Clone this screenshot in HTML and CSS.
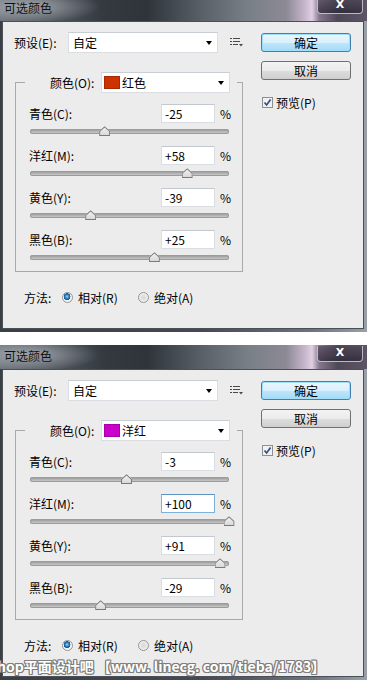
FILE: index.html
```html
<!DOCTYPE html>
<html lang="zh-CN">
  <head>
    <meta charset="UTF-8" />
    <meta name="viewport" content="width=device-width, initial-scale=1.0" />
    <title>可选颜色</title>
    <link rel="stylesheet" href="styles.css">
  </head>
  <body>
    <!-- dialog 1: red -->
    <div class="dialog dialog--cropped">
      <div class="titlebar">
        <span class="titlebar__text">可选颜色</span>
        <span class="titlebar__close">X</span>
      </div>
      <div class="dialog__body">
        <div class="dialog__main">
          <div class="preset">
            <span class="preset__label">预设(E):</span>
            <div class="select select--preset">
              <span>自定</span>
              <i class="select__arrow"></i>
            </div>
            <svg class="preset__menu" width="13" height="9" viewBox="0 0 13 9">
              <g fill="#4a4a4a">
                <rect x="0" y="0" width="2" height="1" />
                <rect x="3" y="0" width="7" height="1" />
                <rect x="0" y="3" width="2" height="1" />
                <rect x="3" y="3" width="7" height="1" />
                <rect x="0" y="6" width="2" height="1" />
                <rect x="3" y="6" width="5" height="1" />
                <path d="M9 6h4l-2 2.5z" />
              </g>
            </svg>
          </div>
          <div class="group">
            <div class="group__head">
              <span class="group__label">颜色(O):</span>
              <div class="select select--color">
                <span class="swatch swatch--red"></span>
                <span>红色</span>
                <i class="select__arrow"></i>
              </div>
            </div>
            <div class="channel">
              <div class="channel__row">
                <span class="channel__name">青色(C):</span>
                <span class="channel__input">-25</span>
                <span class="channel__unit">%</span>
              </div>
              <div class="slider"><span class="slider__thumb" style="left: 37.5%"></span></div>
            </div>
            <div class="channel">
              <div class="channel__row">
                <span class="channel__name">洋红(M):</span>
                <span class="channel__input">+58</span>
                <span class="channel__unit">%</span>
              </div>
              <div class="slider"><span class="slider__thumb" style="left: 79%"></span></div>
            </div>
            <div class="channel">
              <div class="channel__row">
                <span class="channel__name">黄色(Y):</span>
                <span class="channel__input">-39</span>
                <span class="channel__unit">%</span>
              </div>
              <div class="slider"><span class="slider__thumb" style="left: 30.5%"></span></div>
            </div>
            <div class="channel">
              <div class="channel__row">
                <span class="channel__name">黑色(B):</span>
                <span class="channel__input">+25</span>
                <span class="channel__unit">%</span>
              </div>
              <div class="slider"><span class="slider__thumb" style="left: 62.5%"></span></div>
            </div>
          </div>
          <div class="method">
            <span class="method__label">方法:</span>
            <span class="method__option">
              <i class="radio radio--on"></i>相对(R)
            </span>
            <span class="method__option">
              <i class="radio"></i>绝对(A)
            </span>
          </div>
        </div>
        <div class="dialog__side">
          <div class="btn btn--default">确定</div>
          <div class="btn">取消</div>
          <div class="check">
            <svg class="check__box" width="11" height="11" viewBox="0 0 11 11">
              <rect x="0.5" y="0.5" width="10" height="10" fill="#f1f1f1" stroke="#8e8f8f" />
              <path d="M2.5 5.5L4.6 8L8.6 2.6" fill="none" stroke="#2d4f8e" stroke-width="1.7" />
            </svg>
            <span>预览(P)</span>
          </div>
        </div>
      </div>
    </div>

    <!-- dialog 2: magenta -->
    <div class="dialog">
      <div class="titlebar">
        <span class="titlebar__text">可选颜色</span>
        <span class="titlebar__close">X</span>
      </div>
      <div class="dialog__body">
        <div class="dialog__main">
          <div class="preset">
            <span class="preset__label">预设(E):</span>
            <div class="select select--preset">
              <span>自定</span>
              <i class="select__arrow"></i>
            </div>
            <svg class="preset__menu" width="13" height="9" viewBox="0 0 13 9">
              <g fill="#4a4a4a">
                <rect x="0" y="0" width="2" height="1" />
                <rect x="3" y="0" width="7" height="1" />
                <rect x="0" y="3" width="2" height="1" />
                <rect x="3" y="3" width="7" height="1" />
                <rect x="0" y="6" width="2" height="1" />
                <rect x="3" y="6" width="5" height="1" />
                <path d="M9 6h4l-2 2.5z" />
              </g>
            </svg>
          </div>
          <div class="group">
            <div class="group__head">
              <span class="group__label">颜色(O):</span>
              <div class="select select--color">
                <span class="swatch swatch--magenta"></span>
                <span>洋红</span>
                <i class="select__arrow"></i>
              </div>
            </div>
            <div class="channel">
              <div class="channel__row">
                <span class="channel__name">青色(C):</span>
                <span class="channel__input">-3</span>
                <span class="channel__unit">%</span>
              </div>
              <div class="slider"><span class="slider__thumb" style="left: 48.5%"></span></div>
            </div>
            <div class="channel">
              <div class="channel__row">
                <span class="channel__name">洋红(M):</span>
                <span class="channel__input channel__input--focus">+100</span>
                <span class="channel__unit">%</span>
              </div>
              <div class="slider"><span class="slider__thumb" style="left: 100%"></span></div>
            </div>
            <div class="channel">
              <div class="channel__row">
                <span class="channel__name">黄色(Y):</span>
                <span class="channel__input">+91</span>
                <span class="channel__unit">%</span>
              </div>
              <div class="slider"><span class="slider__thumb" style="left: 95.5%"></span></div>
            </div>
            <div class="channel">
              <div class="channel__row">
                <span class="channel__name">黑色(B):</span>
                <span class="channel__input">-29</span>
                <span class="channel__unit">%</span>
              </div>
              <div class="slider"><span class="slider__thumb" style="left: 35.5%"></span></div>
            </div>
          </div>
          <div class="method">
            <span class="method__label">方法:</span>
            <span class="method__option">
              <i class="radio radio--on"></i>相对(R)
            </span>
            <span class="method__option">
              <i class="radio"></i>绝对(A)
            </span>
          </div>
        </div>
        <div class="dialog__side">
          <div class="btn btn--default">确定</div>
          <div class="btn">取消</div>
          <div class="check">
            <svg class="check__box" width="11" height="11" viewBox="0 0 11 11">
              <rect x="0.5" y="0.5" width="10" height="10" fill="#f1f1f1" stroke="#8e8f8f" />
              <path d="M2.5 5.5L4.6 8L8.6 2.6" fill="none" stroke="#2d4f8e" stroke-width="1.7" />
            </svg>
            <span>预览(P)</span>
          </div>
        </div>
      </div>
      <div class="watermark">hop平面设计吧 【www. linecg. com/tieba/1783】</div>
    </div>
  </body>
</html>
```

FILE: styles.css
```css
* {
  margin: 0;
  padding: 0;
  box-sizing: border-box;
}
body {
  margin: 0;
  background: #fff;
  font-family: "Noto Sans CJK SC", "Noto Sans", sans-serif;
  font-size: 12px;
  color: #000;
  overflow: hidden;
}

/* Window */
.dialog {
  width: 367px;
  height: 335px;
  margin-bottom: 13px;
  display: flex;
  flex-direction: column;
  position: relative;
  background: linear-gradient(90deg, #3a3f46 0%, #454a52 55%, #6d737a 85%, #9aa0a7 100%);
}
.dialog--cropped {
  margin-top: -3px;
}
.titlebar {
  height: 24px;
  display: flex;
  justify-content: space-between;
  align-items: flex-start;
  background:
    radial-gradient(ellipse 70px 16px at 30px 10px, rgba(215, 220, 226, 0.55), rgba(215, 220, 226, 0)),
    linear-gradient(90deg, #6d737a 0%, #575d64 12%, #353a41 28%, #2f343b 40%, #5a6067 55%, #7a8087 68%, #8c8995 78%, #c6b6cb 83%, #e0d0e2 85%, #85778e 87%, #4d4856 92%, #5d5566 100%);
}
.titlebar__text {
  line-height: 21px;
  padding-left: 4px;
  color: #111;
}
.titlebar__close {
  width: 46px;
  height: 16px;
  margin: 1px 4px 0 0;
  border: 1px solid rgba(225, 225, 235, 0.75);
  border-top: none;
  border-radius: 0 0 4px 4px;
  background: linear-gradient(180deg, rgba(80, 70, 90, 0.55), rgba(40, 36, 48, 0.7));
  color: #fff;
  font-family: "DejaVu Sans", sans-serif;
  font-weight: bold;
  font-size: 11px;
  line-height: 14px;
  text-align: center;
}
.dialog__body {
  flex: 1;
  margin: 0 3px 3px 2px;
  border: 1px solid #4b5057;
  background: #ececec;
  display: flex;
}
.dialog__main {
  width: 258px;
  padding-top: 10px;
}
.dialog__side {
  width: 90px;
  padding-top: 11px;
}

/* Preset row */
.preset {
  display: flex;
  align-items: center;
  height: 21px;
  margin-left: 11px;
}
.preset__label {
  width: 54px;
}
.preset__menu {
  margin-left: 12px;
}
.select {
  height: 21px;
  display: flex;
  align-items: center;
  padding-left: 4px;
  background: #fff;
  border: 1px solid #dadee3;
  border-top-color: #c9ced4;
}
.select--preset {
  width: 150px;
}
.select--color {
  width: 129px;
  padding-left: 2px;
}
.select__arrow {
  margin-left: auto;
  margin-right: 5px;
  border-left: 3.5px solid transparent;
  border-right: 3.5px solid transparent;
  border-top: 4px solid #000;
}
.swatch {
  width: 16px;
  height: 13px;
  margin-right: 2px;
}
.swatch--red {
  background: #cc3300;
  border: 1px solid #a82a00;
}
.swatch--magenta {
  background: #cc00cc;
  border: 1px solid #a800a8;
}

/* Group box */
.group {
  width: 228px;
  margin: 29px 0 0 12px;
  padding: 0 11px 8px 13px;
  border: 1px solid #a9a9a9;
}
.group__head {
  display: flex;
  align-items: center;
  width: 212px;
  margin: -11px 0 11px -4px;
  padding-left: 25px;
  background: #ececec;
}
.group__label {
  width: 51px;
}
.channel + .channel {
  margin-top: 12px;
}
.channel__row {
  display: flex;
  align-items: center;
  height: 19px;
}
.channel__input {
  width: 54px;
  height: 19px;
  margin-left: auto;
  padding-left: 3px;
  line-height: 17px;
  background: #fff;
  border: 1px solid #dadee3;
  border-top-color: #c3c8ce;
}
.channel__input--focus {
  border-color: #7fb0d8;
  border-top-color: #5d93c0;
}
.channel__unit {
  width: 16px;
  padding-left: 5px;
}
.slider {
  position: relative;
  width: 199px;
  height: 5px;
  margin: 6px 0 3px 1px;
  border-radius: 3px;
  background: linear-gradient(180deg, #8f8f8f 0%, #b4b4b4 50%, #d2d2d2 100%);
  box-shadow: inset 0 0 0 1px #9b9b9b;
}
.slider__thumb {
  position: absolute;
  top: -3px;
  width: 11px;
  height: 10px;
  margin-left: -5.5px;
  background: linear-gradient(180deg, #f4f4f4, #d6d6d6);
  clip-path: polygon(50% 0, 100% 50%, 100% 100%, 0 100%, 0 50%);
}
.slider__thumb::before {
  content: "";
  position: absolute;
  inset: 0;
  background: #7a7a7a;
  clip-path: polygon(50% 0, 100% 50%, 100% 100%, 0 100%, 0 50%, 1px 50%, 1px calc(100% - 1px), calc(100% - 1px) calc(100% - 1px), calc(100% - 1px) calc(50% + 0.5px), 50% 1.4px, 1px calc(50% + 0.5px), 0 50%);
}

/* Method */
.method {
  display: flex;
  align-items: center;
  height: 16px;
  margin: 17px 0 0 21px;
}
.method__label {
  width: 38px;
}
.method__option {
  display: flex;
  align-items: center;
  width: 76px;
}
.radio {
  width: 11px;
  height: 11px;
  margin-right: 5px;
  border-radius: 50%;
  border: 1px solid #949494;
  background: radial-gradient(circle at 50% 50%, #d8d8d8 0, #e6e6e6 3px, #f6f6f6 5px);
}
.radio--on {
  background: radial-gradient(circle at 45% 40%, #9fd4f6 0, #2b7fc2 2px, #13558f 3.2px, #f4f4f4 3.6px);
}

/* Side buttons */
.btn {
  width: 90px;
  height: 19px;
  line-height: 17px;
  text-align: center;
  border: 1px solid #707070;
  border-radius: 3px;
  background: linear-gradient(180deg, #f3f3f3 0%, #ebebeb 50%, #dddddd 51%, #cfcfcf 100%);
}
.btn + .btn {
  margin-top: 9px;
}
.btn--default {
  border-color: #3c7fb1;
  background: linear-gradient(180deg, #eaf6fd 0%, #d9f0fc 50%, #bee6fd 51%, #a7d9f5 100%);
  box-shadow: inset 0 0 0 1px #9ee0fb;
}
.check {
  display: flex;
  align-items: center;
  margin: 16px 0 0 1px;
  height: 12px;
}
.check__box {
  margin-right: 3px;
}

/* Watermark on the second screenshot */
.watermark {
  position: absolute;
  left: -3px;
  bottom: 4px;
  font-weight: bold;
  font-size: 14px;
  line-height: 20px;
  color: #fff;
  white-space: nowrap;
  text-shadow: 1px 0 #7d7d7d, -1px 0 #7d7d7d, 0 1px #7d7d7d, 0 -1px #7d7d7d, 1px 1px #7d7d7d, -1px -1px #7d7d7d, 1px -1px #7d7d7d, -1px 1px #7d7d7d;
}
```
